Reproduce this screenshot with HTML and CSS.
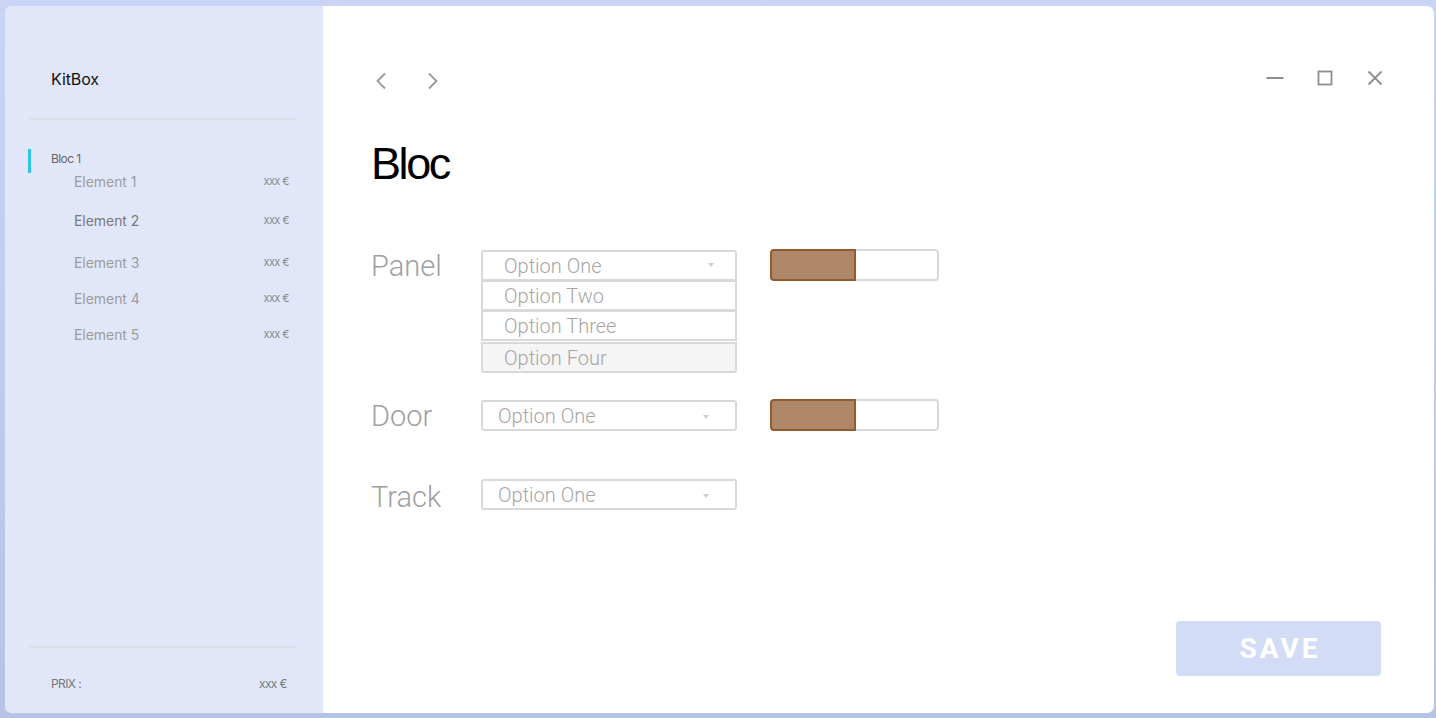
FILE: index.html
```html
<!DOCTYPE html>
<html lang="fr">
<head>
<meta charset="utf-8">
<title>KitBox</title>
<link rel="stylesheet" href="styles.css">
</head>
<body>
<div class="window">
  <aside class="sidebar">
    <div class="brand">KitBox</div>
    <div class="divider top-divider"></div>
    <div class="bloc-title">Bloc 1</div>
    <ul class="elements">
      <li class="el"><span>Element 1</span><span class="price">xxx €</span></li>
      <li class="el el-active gap3"><span>Element 2</span><span class="price">xxx €</span></li>
      <li class="el gap6"><span>Element 3</span><span class="price">xxx €</span></li>
      <li class="el"><span>Element 4</span><span class="price">xxx €</span></li>
      <li class="el"><span>Element 5</span><span class="price">xxx €</span></li>
    </ul>
    <div class="divider bottom-divider"></div>
    <div class="total"><span>PRIX :</span><span class="price">xxx €</span></div>
  </aside>
  <main class="main">
    <header class="topbar">
      <div class="nav">
        <svg class="chev" width="12" height="18" viewBox="0 0 12 18"><polyline points="10,1.5 2.5,9 10,16.5" fill="none" stroke="#9a9a9a" stroke-width="1.8"/></svg>
        <svg class="chev" width="12" height="18" viewBox="0 0 12 18"><polyline points="2,1.5 9.5,9 2,16.5" fill="none" stroke="#9a9a9a" stroke-width="1.8"/></svg>
      </div>
      <div class="controls">
        <svg width="18" height="18" viewBox="0 0 18 18"><line x1="0.5" y1="9" x2="17.5" y2="9" stroke="#8e8e8e" stroke-width="1.8"/></svg>
        <svg width="18" height="18" viewBox="0 0 18 18"><rect x="2.5" y="2.5" width="13" height="13" fill="none" stroke="#8e8e8e" stroke-width="1.8"/></svg>
        <svg width="18" height="18" viewBox="0 0 18 18"><path d="M2.5 2.5 L15.5 15.5 M15.5 2.5 L2.5 15.5" fill="none" stroke="#8e8e8e" stroke-width="1.8"/></svg>
      </div>
    </header>
    <h1 class="title">Bloc</h1>
    <section class="form">
      <div class="row row-panel">
        <div class="label">Panel</div>
        <div class="dropdown open">
          <div class="select wide"><span>Option One</span><span class="caret caret-wide"></span></div>
          <div class="option">Option Two</div>
          <div class="option">Option Three</div>
          <div class="option option-last">Option Four</div>
        </div>
        <div class="toggle"><span class="half on"></span><span class="half off"></span></div>
      </div>
      <div class="row row-door">
        <div class="label">Door</div>
        <div class="dropdown">
          <div class="select"><span>Option One</span><span class="caret"></span></div>
        </div>
        <div class="toggle"><span class="half on"></span><span class="half off"></span></div>
      </div>
      <div class="row row-track">
        <div class="label">Track</div>
        <div class="dropdown">
          <div class="select"><span>Option One</span><span class="caret"></span></div>
        </div>
      </div>
    </section>
    <button class="save">SAVE</button>
  </main>
</div>
</body>
</html>
```

FILE: styles.css
```css
* { box-sizing: border-box; }
html, body { margin: 0; height: 100%; }
body {
  background: linear-gradient(180deg, #cad4f5 0%, #b5c3e6 100%);
  padding: 6px 2px 5px 5px;
  font-family: Inter, "Noto Sans", sans-serif;
}
.window {
  display: flex;
  height: 707px;
  border-radius: 7px;
  overflow: hidden;
  background: #fff;
}
.sidebar {
  width: 318px;
  flex: none;
  background: #e1e7f9;
  display: flex;
  flex-direction: column;
}
.brand {
  padding: 63px 0 0 46px;
  line-height: 20px;
  height: 83px;
  font-size: 16px;
  color: #111;
  letter-spacing: -0.1px;
}
.divider {
  height: 2px;
  background: #dcdee4;
  margin: 0 27px 0 25px;
}
.top-divider { margin-top: 29px; }
.bloc-title {
  margin: 29px 0 -10px 23px;
  height: 24px;
  border-left: 3px solid #2bc5e8;
  padding-left: 20px;
  font-size: 12px;
  line-height: 20px;
  color: #666;
  letter-spacing: -0.6px;
}
.elements {
  list-style: none;
  margin: 0;
  padding: 0 34px 0 69px;
}
.el {
  display: flex;
  justify-content: space-between;
  align-items: center;
  height: 36px;
  font-size: 14px;
  color: #9d9d9d;
  letter-spacing: -0.05px;
}
.el-active { color: #7a7a7a; }
.gap3 { margin-top: 3px; }
.gap6 { margin-top: 6px; }
.price {
  font-size: 11px;
  color: #8a8a8a;
  letter-spacing: -0.6px;
}
.bottom-divider { margin-top: auto; }
.total {
  display: flex;
  justify-content: space-between;
  align-items: center;
  height: 20px;
  margin: 25px 36px 20px 46px;
  font-size: 12px;
  color: #777;
  letter-spacing: -0.6px;
}
.total .price { font-size: 12px; color: #7a7a7a; }

.main {
  flex: 1;
  display: flex;
  flex-direction: column;
  padding: 61px 50px 37px 48px;
}
.topbar {
  display: flex;
  justify-content: space-between;
  align-items: center;
  height: 24px;
}
.nav {
  display: flex;
  gap: 40px;
  margin-left: 4px;
  margin-top: 4px;
}
.controls {
  display: flex;
  gap: 32px;
  margin-top: -3px;
}
.controls svg, .nav svg { display: block; }
.title {
  margin: 50px 0 0 0;
  font-family: "Liberation Sans", Arial, sans-serif;
  font-weight: 400;
  font-size: 45px;
  line-height: 45px;
  letter-spacing: -2.4px;
  color: #000;
}
.form {
  margin-top: 63px;
  display: flex;
  flex-direction: column;
}
.row {
  display: flex;
  align-items: flex-start;
}
.row-door { margin-top: 26px; }
.row-track { margin-top: 46px; }
.label {
  width: 110px;
  flex: none;
  font-family: Roboto, "Liberation Sans", sans-serif;
  font-weight: 300;
  font-size: 29px;
  line-height: 32px;
  color: #a0a0a0;
  margin-top: 1px;
}
.row-track .label { margin-top: 3px; }
.dropdown {
  width: 256px;
  flex: none;
  display: flex;
  flex-direction: column;
  margin-top: 1px;
}
.select, .option {
  font-family: Roboto, "Liberation Sans", sans-serif;
  font-weight: 300;
  font-size: 20px;
  color: #a6a6a6;
  border: 2px solid #d9d9d9;
}
.select {
  display: flex;
  justify-content: space-between;
  align-items: center;
  height: 31px;
  padding: 0 26px 0 15px;
  border-radius: 3px;
}
.select.wide { padding-left: 21px; padding-right: 21px; border-radius: 3px 3px 0 0; }
.caret {
  width: 0;
  height: 0;
  border-left: 3.5px solid transparent;
  border-right: 3.5px solid transparent;
  border-top: 4px solid #cfcfcf;
  margin-top: 2px;
}
.caret-wide { margin-top: -1px; }
.option {
  height: 31px;
  line-height: 28px;
  padding-left: 21px;
  margin-top: -1px;
}
.option-last {
  background: #f5f5f5;
  border-radius: 0 0 3px 3px;
  margin-top: 1px;
}
.toggle {
  display: flex;
  width: 169px;
  height: 32px;
  margin-left: 33px;
  flex: none;
}
.half { flex: 1; }
.half.on {
  background: #ad8767;
  border: 2px solid #945c2e;
  border-radius: 4px 0 0 4px;
}
.half.off {
  background: #fff;
  border: 2px solid #d6d9d9;
  border-left: none;
  border-radius: 0 4px 4px 0;
}
.save {
  margin-top: auto;
  align-self: flex-end;
  margin-right: 3px;
  width: 205px;
  height: 55px;
  border: none;
  border-radius: 4px;
  background: #d3dcf7;
  color: #fff;
  font-family: Roboto, "Liberation Sans", sans-serif;
  font-weight: 700;
  font-size: 28px;
  letter-spacing: 3px;
  padding: 0 0 0 3px;
}
```
